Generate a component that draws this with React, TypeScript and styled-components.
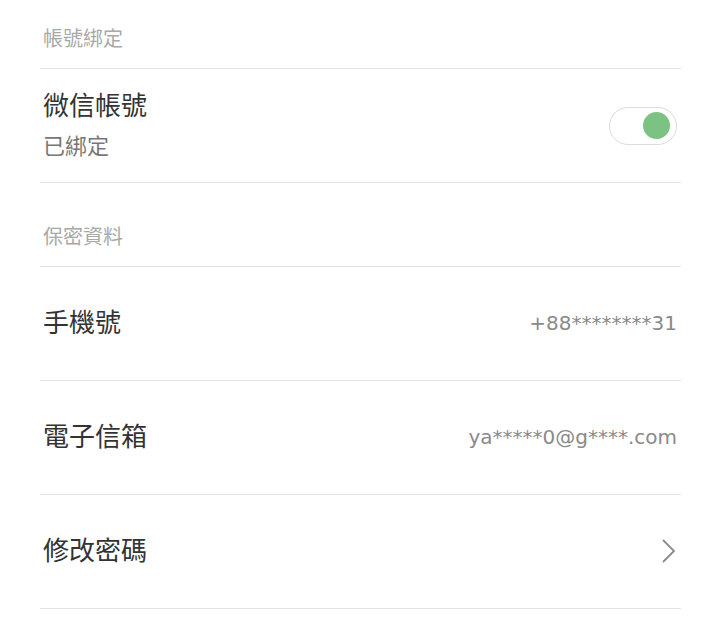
import styled, { createGlobalStyle } from 'styled-components';

const GlobalStyle = createGlobalStyle`
  html, body {
    margin: 0;
    padding: 0;
    background: #ffffff;
  }
  body {
    font-family: "Noto Sans CJK TC", "Noto Sans", "Liberation Sans", sans-serif;
  }
`;

const Page = styled.div`
  width: 720px;
  height: 618px;
  padding: 0 39px 0 40px;
  box-sizing: border-box;
  overflow: hidden;
  background: #fff;
`;

const SectionHeader = styled.div<{ $height: number }>`
  height: ${(p) => p.$height}px;
  display: flex;
  align-items: flex-end;
  padding-bottom: 18px;
  box-sizing: border-box;
  padding-left: 3px;
  font-size: 20px;
  line-height: 24px;
  color: #a8a8a8;
  border-bottom: 1px solid #e2e2e2;
`;

const Row = styled.div`
  height: 114px;
  box-sizing: border-box;
  display: flex;
  align-items: center;
  justify-content: space-between;
  padding: 0 4px 6px 3px;
  border-bottom: 1px solid #e2e2e2;
`;

const RowText = styled.div`
  display: flex;
  flex-direction: column;
  gap: 10px;
`;

const Title = styled.div`
  font-size: 26px;
  line-height: 32px;
  color: #333;
`;

const Sub = styled.div`
  font-size: 22px;
  line-height: 28px;
  color: #777;
`;

const Value = styled.div`
  font-family: "DejaVu Sans", "Liberation Sans", sans-serif;
  font-size: 20px;
  color: #8a8a8a;
  margin-top: 4px;
`;

const Toggle = styled.div`
  width: 68px;
  height: 38px;
  box-sizing: border-box;
  border: 1px solid #dcdcdc;
  border-radius: 19px;
  display: flex;
  align-items: center;
  justify-content: flex-end;
  padding-right: 6px;
  background: #fff;
  margin-top: 6px;
`;

const Knob = styled.div`
  width: 27px;
  height: 27px;
  border-radius: 50%;
  background: #7cc383;
`;

const ChevronIcon = styled.svg`
  margin-top: 4px;
`;

const Chevron = () => (
  <ChevronIcon width="16" height="26" viewBox="0 0 16 26" fill="none">
    <path d="M2 2 L13 13 L2 24" stroke="#8a8a8a" strokeWidth="1.8" />
  </ChevronIcon>
);

export default function App() {
  return (
    <>
      <GlobalStyle />
      <Page>
        <SectionHeader $height={69}>帳號綁定</SectionHeader>
        <Row>
          <RowText>
            <Title>微信帳號</Title>
            <Sub>已綁定</Sub>
          </RowText>
          <Toggle>
            <Knob />
          </Toggle>
        </Row>
        <SectionHeader $height={84}>保密資料</SectionHeader>
        <Row>
          <Title>手機號</Title>
          <Value>+88********31</Value>
        </Row>
        <Row>
          <Title>電子信箱</Title>
          <Value>ya*****0@g****.com</Value>
        </Row>
        <Row>
          <Title>修改密碼</Title>
          <Chevron />
        </Row>
      </Page>
    </>
  );
}
